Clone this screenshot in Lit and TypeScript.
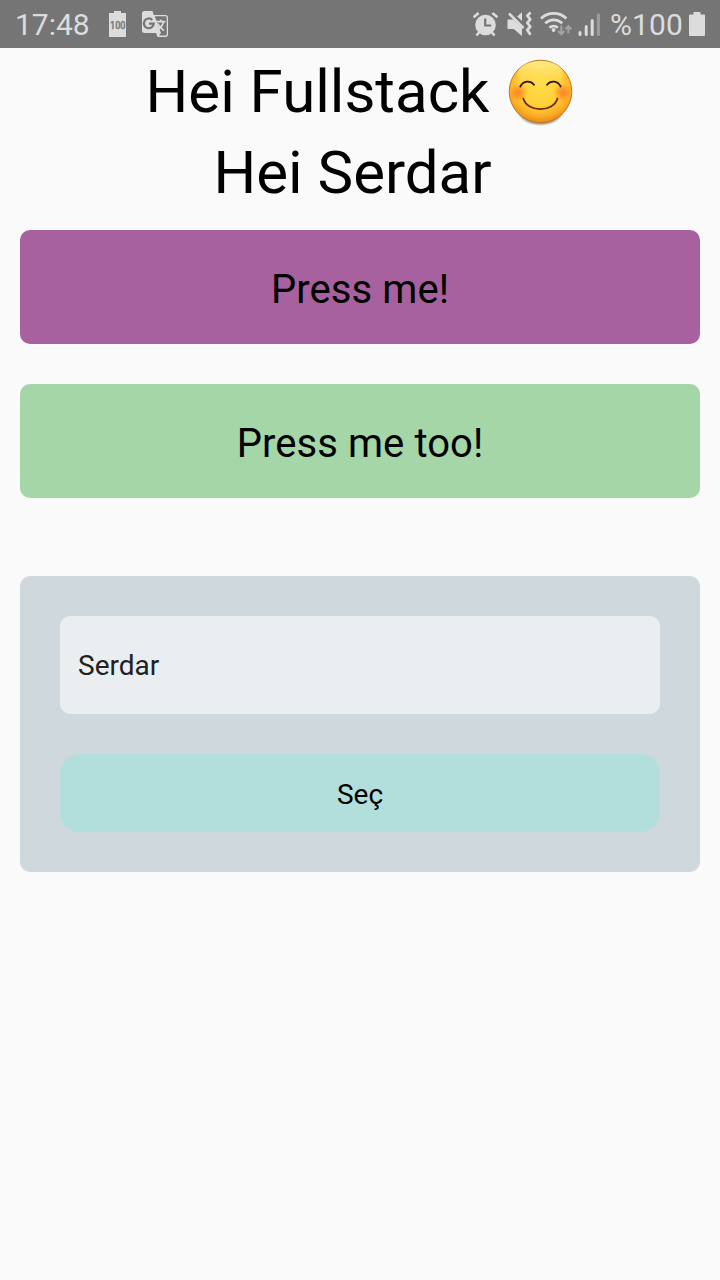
import { LitElement, html, css } from "lit";
import { customElement, property } from "lit/decorators.js";

@customElement("status-bar")
class StatusBar extends LitElement {
  static styles = css`
    :host { display: flex; justify-content: space-between; height: 48px; box-sizing: border-box; padding: 0 14px 0 15px; background: #757575; color: #dcdcdc; font-size: 30px; line-height: 48px; }
    .group { display: flex; height: 48px; }
    .time { width: 93px; padding-top: 1px; height: 47px; box-sizing: border-box; }
    .level { width: 79px; padding-top: 1px; height: 47px; box-sizing: border-box; letter-spacing: 0.1px; }
    svg { display: block; height: 48px; }
  `;
  render() {
    return html`
      <div class="group">
        <div class="time">17:48</div>
        <svg width="34" viewBox="108 0 34 48" fill="#dcdcdc">
          <path d="M109 13h5v-2h7v2h5v24h-17z" />
          <text x="110" y="29.2" font-family="Roboto" font-size="10" font-weight="500" fill="#757575" stroke="#757575" stroke-width=".3" textLength="15.500" lengthAdjust="spacingAndGlyphs">100</text>
        </svg>
        <svg width="27" viewBox="142 0 27 48">
          <path d="M144.500 11h8l1.300 4h11.700a2.500 2.500 0 0 1 2.500 2.500v17a2.500 2.500 0 0 1-2.500 2.500h-8l-1.300-4h-11.700a2.500 2.500 0 0 1-2.500-2.500v-17a2.500 2.500 0 0 1 2.500-2.500z" fill="#dcdcdc" />
          <path d="M154.700 16.300h10.800a1.200 1.200 0 0 1 1.200 1.200v16.800a1.200 1.200 0 0 1-1.200 1.200h-6.500l2-2.500z" fill="#757575" />
          <path d="M156 21.600h9.400M160.700 19.500v2M163.400 22c-.6 3-2.700 5.500-5.400 7.300M157.800 23.500c1.200 2.700 3.500 5 6 7.200" fill="none" stroke="#dcdcdc" stroke-width="1.700" />
          <path d="M152.300 19.900a4.900 4.900 0 1 0 1.400 3.800h-4.700" fill="none" stroke="#757575" stroke-width="2.200" />
        </svg>
      </div>
      <div class="group">
        <svg width="34" viewBox="473 0 34 48">
          <circle cx="485.500" cy="25" r="10.300" fill="#dcdcdc" />
          <path d="M473.600 17.300l5-4.400M497.400 17.300l-5-4.400M480 31.500l-3.600 4M491 31.500l3.600 4" stroke="#dcdcdc" stroke-width="2.600" fill="none" />
          <path d="M485.200 18.500v7h6" stroke="#757575" stroke-width="2.200" fill="none" />
        </svg>
        <svg width="33" viewBox="507 0 33 48">
          <path d="M507.500 19.500h5.500l9 8V36l-8.300-7h-6.200zM522 12.200v8.800l-4.800-4.400z" fill="#dcdcdc" />
          <path d="M509 13.500l14.500 14.500" stroke="#dcdcdc" stroke-width="2.500" />
          <path d="M530.500 12.500l-3.200 3.200 3 3.600-3 3.600 3 3.600-3 3.500 3.200 4.800" fill="none" stroke="#dcdcdc" stroke-width="2.700" stroke-linejoin="round" />
        </svg>
        <svg width="38" viewBox="540 0 38 48" fill="none">
          <path d="M541 18.500a18.300 18.300 0 0 1 25.400 0M545.200 23.300a12.200 12.200 0 0 1 17 0M549.400 27.800a6.200 6.200 0 0 1 8.400 0" stroke="#dcdcdc" stroke-width="2.600" />
          <circle cx="553.600" cy="30" r="1.900" fill="#dcdcdc" />
          <path d="M561.300 25.500v8.700M558.200 31l3.100 3.300 3.100-3.300M568.400 33v-6.200M565.300 29.400l3.100-3.300 3.100 3.300" stroke="#a3a3a3" stroke-width="2" />
        </svg>
        <svg width="32" viewBox="578 0 32 48" stroke-width="3" stroke-linecap="round">
          <path d="M580 32.500v2M586.200 26.500v8M592.200 20.500v14" stroke="#dcdcdc" />
          <path d="M598.400 14.700v19.800" stroke="#9e9e9e" />
        </svg>
        <div class="level">%100</div>
        <svg width="17" viewBox="689 0 17 48"><path d="M690 14.500h3.500V12h7v2.500h3.500a1 1 0 0 1 1 1V35a1 1 0 0 1-1 1h-14a1 1 0 0 1-1-1V15.500a1 1 0 0 1 1-1z" fill="#dcdcdc" /></svg>
      </div>`;
  }
}

@customElement("smile-face")
class SmileFace extends LitElement {
  static styles = css`
    :host { display: block; width: 68px; height: 70px; }
    svg { display: block; }
  `;
  render() {
    return html`<svg width="68" height="70" viewBox="506 57 68 70">
      <defs>
        <radialGradient id="skin" gradientUnits="userSpaceOnUse" cx="540.500" cy="84" r="42">
          <stop offset="0" stop-color="#ffdc48" /><stop offset=".5" stop-color="#ffd039" /><stop offset=".75" stop-color="#fdb026" /><stop offset=".95" stop-color="#ea8212" />
        </radialGradient>
        <linearGradient id="shine" x1="0" y1="0" x2="0" y2="1"><stop offset="0" stop-color="#fff3a0" stop-opacity=".8" /><stop offset="1" stop-color="#ffe35c" stop-opacity="0" /></linearGradient>
        <radialGradient id="blush"><stop offset="0" stop-color="#ff6a2a" stop-opacity=".72" /><stop offset=".45" stop-color="#ff7124" stop-opacity=".5" /><stop offset="1" stop-color="#ff8a20" stop-opacity="0" /></radialGradient>
        <radialGradient id="shade"><stop offset=".8" stop-color="#504030" stop-opacity=".65" /><stop offset="1" stop-color="#504030" stop-opacity="0" /></radialGradient>
        <clipPath id="disc"><circle cx="540.500" cy="91.500" r="31.500" /></clipPath>
      </defs>
      <ellipse cx="540.500" cy="110" rx="24" ry="16" fill="url(#shade)" />
      <circle cx="540.500" cy="91.500" r="31.300" fill="url(#skin)" stroke="#bd7a20" stroke-width="1" />
      <ellipse cx="540.500" cy="74" rx="23" ry="13" fill="url(#shine)" />
      <g clip-path="url(#disc)"><circle cx="518.300" cy="92.500" r="9.500" fill="url(#blush)" /><circle cx="562.700" cy="92.500" r="9.500" fill="url(#blush)" /></g>
      <g fill="none" stroke-linecap="round">
        <path d="M520.300 86.500c3.200-6 10.200-6.200 13.700-1.700M547 84.800c3.500-4.500 10.500-4.300 13.700 1.700" stroke="#2c1a08" stroke-width="1.800" />
        <path d="M523.300 98.500c4 14.200 30.200 14.200 34.200 0" stroke="#6a2c08" stroke-width="1.800" />
      </g>
    </svg>`;
  }
}

@customElement("press-card")
class PressCard extends LitElement {
  @property() label = "";
  static styles = css`
    :host { display: flex; align-items: center; justify-content: center; height: 114px; border-radius: 10px; font-size: 40px; letter-spacing: 0.08px; color: #000; box-sizing: border-box; padding-top: 4px; }
  `;
  render() { return html`<span>${this.label}</span>`; }
}

@customElement("app-root")
class AppRoot extends LitElement {
  static styles = css`
    :host { display: block; height: 1280px; background: #fafafa; font-family: Roboto, sans-serif; color: #000; overflow: hidden; }
    .heading { font-size: 60px; line-height: 81px; height: 182px; text-align: center; box-sizing: border-box; padding-top: 3px; }
    .line { display: flex; justify-content: center; height: 81px; }
    .second { padding-right: 15px; }
    smile-face { margin: 6px 0 0 17px; }
    .content { padding: 0 20px; }
    .purple { background: #a7619f; }
    .green { background: #a5d6a7; margin-top: 40px; }
    .form { margin-top: 78px; height: 296px; padding: 40px; box-sizing: border-box; border-radius: 10px; background: #cfd8dc; font-size: 28px; }
    .field { height: 98px; border-radius: 10px; background: #eaeef1; color: #212121; box-sizing: border-box; padding: 2px 18px 0; line-height: 96px; }
    .choose { height: 78px; margin-top: 40px; border-radius: 20px; background: #b2dfdb; text-align: center; line-height: 82px; }
  `;
  render() {
    return html`
      <status-bar></status-bar>
      <div class="heading">
        <div class="line"><span>Hei Fullstack</span><smile-face></smile-face></div>
        <div class="line second">Hei Serdar</div>
      </div>
      <div class="content">
        <press-card class="purple" label="Press me!"></press-card>
        <press-card class="green" label="Press me too!"></press-card>
        <div class="form">
          <div class="field">Serdar</div>
          <div class="choose">Seç</div>
        </div>
      </div>`;
  }
}
